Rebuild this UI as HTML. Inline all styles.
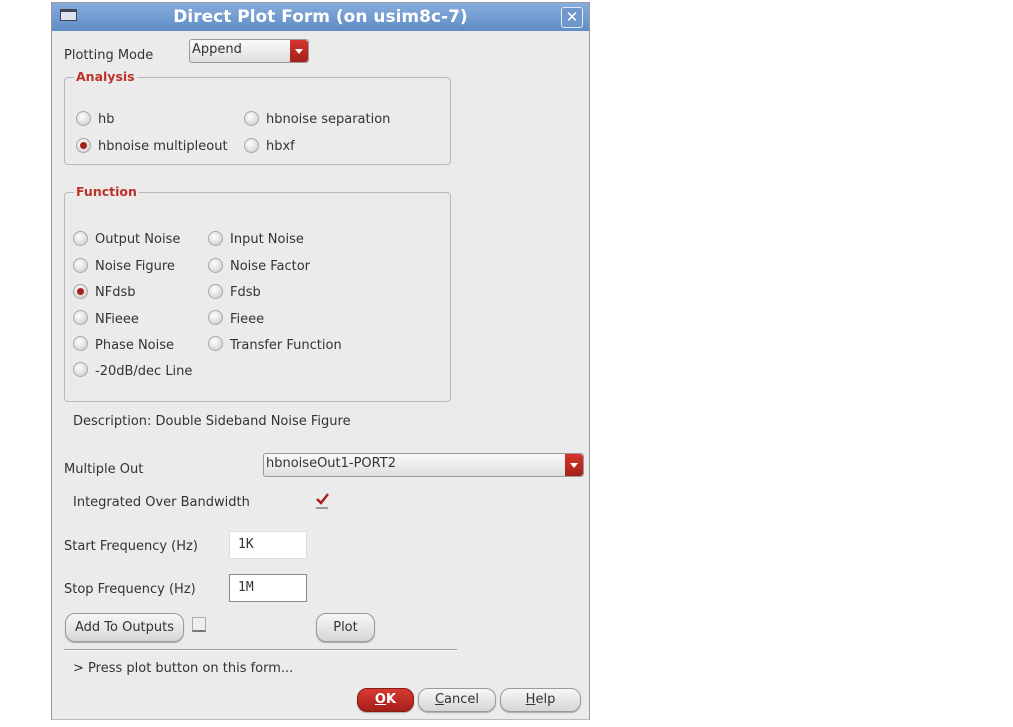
<!DOCTYPE html>
<html><head><style>
body{margin:0;width:1013px;height:727px;background:#fff;position:relative;font-family:"DejaVu Sans","Liberation Sans",sans-serif;font-size:13px;color:#333;overflow:hidden}
.a{position:absolute;white-space:nowrap}
.t{margin-top:2px}
#win{position:absolute;left:51px;top:2px;width:537px;height:716px;background:#ebebeb;border:1px solid #9a9a9a;border-bottom-color:#bbb}
#title{position:absolute;left:52px;top:3px;width:537px;height:28px;background:linear-gradient(#86acdc,#5f8cc6);color:#fff;font-weight:bold;font-size:17px;text-align:center;line-height:28px}
.box{position:absolute;border:1px solid #b8b8b8;border-radius:4px}
.leg{position:absolute;background:#ebebeb;color:#c0312a;font-weight:bold;font-size:12.5px;padding:0 2px}
.r{position:absolute;width:13px;height:13px;border-radius:50%;background:radial-gradient(circle at 40% 35%,#fff,#d8d8d8 70%,#aaa);border:1px solid #a8a8a8}
.r.on::after{content:"";position:absolute;left:3px;top:3px;width:7px;height:7px;border-radius:50%;background:#a3221c}
.btn{position:absolute;border:1px solid #9a9a9a;border-radius:10px;background:linear-gradient(#f7f7f7,#d6d6d6);text-align:center;font-size:13px;color:#333;box-shadow:0 1px 1px #aaa}
.dd{position:absolute;border:1px solid #999;border-radius:3px;background:linear-gradient(#fafafa,#dedede);font-size:13px;color:#333}
.dd .arr{position:absolute;right:0;top:0;bottom:0;width:18px;background:linear-gradient(#d5352d,#a2211a);border-radius:0 3px 3px 0}
.dd .arr::after{content:"";position:absolute;left:5px;top:9px;border:4px solid transparent;border-top:5px solid #fff}
.inp{position:absolute;background:#fff;border:1px solid #aaa;font-family:"DejaVu Sans Mono",monospace;font-size:13px;padding-left:8px;box-sizing:border-box}
</style></head><body>
<div id="win"></div>
<div id="title">Direct Plot Form (on usim8c-7)</div>
<div class="a" style="left:60px;top:9px;width:17px;height:12px;border:1px solid #445;background:#dde4ef;box-sizing:border-box;border-top-width:3px"></div>
<div class="a" style="left:561px;top:7px;width:20px;height:19px;border:1px solid #dfe8f5;border-radius:3px;background:#6f97cd;color:#fff;font-weight:bold;text-align:center;line-height:19px;font-size:15px">✕</div>

<div class="a" style="left:64px;top:48px">Plotting Mode</div>
<div class="dd" style="left:189px;top:39px;width:118px;height:22px"><span style="position:absolute;left:2px;top:2px">Append</span><div class="arr"></div></div>

<div class="box" style="left:64px;top:77px;width:385px;height:86px"></div>
<div class="leg" style="left:74px;top:69px">Analysis</div>
<div class="r" style="left:76px;top:111px"></div><div class="a" style="left:98px;top:112px">hb</div>
<div class="r" style="left:244px;top:111px"></div><div class="a" style="left:266px;top:112px">hbnoise separation</div>
<div class="r on" style="left:76px;top:138px"></div><div class="a" style="left:98px;top:139px">hbnoise multipleout</div>
<div class="r" style="left:244px;top:138px"></div><div class="a" style="left:266px;top:139px">hbxf</div>

<div class="box" style="left:64px;top:192px;width:385px;height:208px"></div>
<div class="leg" style="left:74px;top:184px">Function</div>
<div class="r" style="left:73px;top:231px"></div><div class="a" style="left:95px;top:232px">Output Noise</div>
<div class="r" style="left:208px;top:231px"></div><div class="a" style="left:230px;top:232px">Input Noise</div>
<div class="r" style="left:73px;top:258px"></div><div class="a" style="left:95px;top:259px">Noise Figure</div>
<div class="r" style="left:208px;top:258px"></div><div class="a" style="left:230px;top:259px">Noise Factor</div>
<div class="r on" style="left:73px;top:284px"></div><div class="a" style="left:95px;top:285px">NFdsb</div>
<div class="r" style="left:208px;top:284px"></div><div class="a" style="left:230px;top:285px">Fdsb</div>
<div class="r" style="left:73px;top:310px"></div><div class="a" style="left:95px;top:312px">NFieee</div>
<div class="r" style="left:208px;top:310px"></div><div class="a" style="left:230px;top:312px">Fieee</div>
<div class="r" style="left:73px;top:336px"></div><div class="a" style="left:95px;top:338px">Phase Noise</div>
<div class="r" style="left:208px;top:336px"></div><div class="a" style="left:230px;top:338px">Transfer Function</div>
<div class="r" style="left:73px;top:362px"></div><div class="a" style="left:95px;top:364px">-20dB/dec Line</div>

<div class="a" style="left:73px;top:414px">Description: Double Sideband Noise Figure</div>

<div class="a" style="left:64px;top:462px">Multiple Out</div>
<div class="dd" style="left:263px;top:453px;width:319px;height:22px"><span style="position:absolute;left:2px;top:2px">hbnoiseOut1-PORT2</span><div class="arr"></div></div>
<div class="a" style="left:73px;top:495px">Integrated Over Bandwidth</div>
<div class="a" style="left:316px;top:495px;width:12px;height:12px;border-bottom:2px solid #999"><svg width="13" height="12" style="position:absolute;left:0;top:-2px"><path d="M1 6 L5 10 L12 1" stroke="#b02020" stroke-width="2.5" fill="none"/></svg></div>

<div class="a" style="left:64px;top:539px">Start Frequency (Hz)</div>
<div class="inp" style="left:229px;top:531px;width:78px;height:28px;line-height:26px;border-color:#ddd">1K</div>
<div class="a" style="left:64px;top:582px">Stop Frequency (Hz)</div>
<div class="inp" style="left:229px;top:574px;width:78px;height:28px;line-height:26px;border-color:#888">1M</div>

<div class="btn" style="left:65px;top:613px;width:117px;height:27px;line-height:27px">Add To Outputs</div>
<div class="a" style="left:192px;top:617px;width:12px;height:12px;border:1px solid #aaa;border-bottom:2px solid #777;background:#eee"></div>
<div class="btn" style="left:316px;top:613px;width:57px;height:27px;line-height:27px">Plot</div>

<div class="a" style="left:64px;top:649px;width:393px;height:1px;background:#999;border-bottom:1px solid #fff"></div>
<div class="a" style="left:73px;top:661px">&gt; Press plot button on this form...</div>

<div class="btn" style="left:357px;top:688px;width:55px;height:22px;line-height:22px;background:linear-gradient(#d83a32,#a51e18);color:#fff;font-weight:bold;border-color:#8a1a14"><u>O</u>K</div>
<div class="btn" style="left:418px;top:688px;width:76px;height:22px;line-height:22px"><u>C</u>ancel</div>
<div class="btn" style="left:500px;top:688px;width:79px;height:22px;line-height:22px"><u>H</u>elp</div>
</body></html>
